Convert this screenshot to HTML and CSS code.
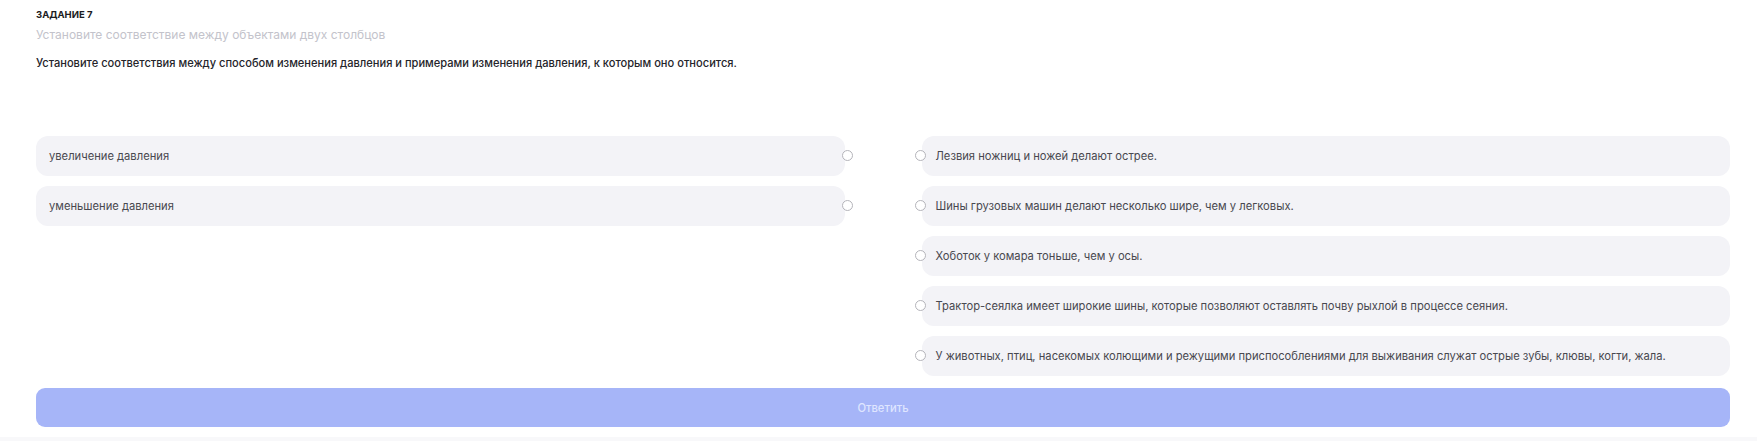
FILE: index.html
```html
<!DOCTYPE html>
<html lang="ru">
<head>
    <meta charset="UTF-8">
    <meta name="viewport" content="width=device-width, initial-scale=1.0">
    <title>Задание 7</title>
    <link rel="stylesheet" href="styles.css">
</head>
<body>

<div class="task">
    <h3 class="task-label">Задание 7</h3>
    <p class="task-hint">Установите соответствие между объектами двух столбцов</p>
    <p class="task-question">Установите соответствия между способом изменения давления и примерами изменения давления, к которым оно относится.</p>

    <div class="match">
        <div class="match-column">
            <div class="match-item left">
                <span>увеличение давления</span>
                <span class="radio"></span>
            </div>
            <div class="match-item left">
                <span>уменьшение давления</span>
                <span class="radio"></span>
            </div>
        </div>
        <div class="match-column">
            <div class="match-item right">
                <span class="radio"></span>
                <span>Лезвия ножниц и ножей делают острее.</span>
            </div>
            <div class="match-item right">
                <span class="radio"></span>
                <span>Шины грузовых машин делают несколько шире, чем у легковых.</span>
            </div>
            <div class="match-item right">
                <span class="radio"></span>
                <span>Хоботок у комара тоньше, чем у осы.</span>
            </div>
            <div class="match-item right">
                <span class="radio"></span>
                <span>Трактор-сеялка имеет широкие шины, которые позволяют оставлять почву рыхлой в процессе сеяния.</span>
            </div>
            <div class="match-item right">
                <span class="radio"></span>
                <span>У животных, птиц, насекомых колющими и режущими приспособлениями для выживания служат острые зубы, клювы, когти, жала.</span>
            </div>
        </div>
    </div>

    <button class="answer-button" disabled>Ответить</button>
</div>

</body>
</html>
```

FILE: styles.css
```css
body {
    font-family: Inter, "Noto Sans", sans-serif;
    margin: 0;
    padding: 0;
    background-color: #f8f8fa;
}
.task {
    background-color: #fff;
    padding: 9px 27px 10px 36px;
}
.task-label {
    margin: 0;
    font-size: 9.5px;
    line-height: 12px;
    font-weight: 700;
    text-transform: uppercase;
    color: #1c1c22;
}
.task-hint {
    margin: 6px 0 0;
    font-size: 12px;
    line-height: 16px;
    color: #c3c3cb;
}
.task-question {
    margin: 12px 0 0;
    font-size: 11.1px;
    line-height: 16px;
    font-weight: 500;
    color: #24242a;
}
/* matching columns */
.match {
    display: grid;
    grid-template-columns: 1fr 1fr;
    column-gap: 77px;
    margin-top: 65px;
}
.match-column {
    display: flex;
    flex-direction: column;
    gap: 10px;
}
.match-item {
    position: relative;
    display: flex;
    align-items: center;
    height: 40px;
    border-radius: 12px;
    background-color: #f3f3f7;
    font-size: 11.2px;
    color: #48484f;
}
.match-item.left {
    padding-left: 13px;
}
.match-item.right {
    padding-left: 14px;
}
.radio {
    position: absolute;
    top: 50%;
    width: 9px;
    height: 9px;
    margin-top: -6px;
    border: 1.5px solid #b4b4ba;
    border-radius: 50%;
    background-color: #fff;
}
.left .radio {
    right: -8px;
}
.right .radio {
    left: -7px;
}
.answer-button {
    display: block;
    width: 100%;
    height: 39px;
    margin-top: 12px;
    border: none;
    border-radius: 9px;
    background-color: #a6b5f8;
    color: #dfe5ff;
    font-family: inherit;
    font-size: 11.2px;
    font-weight: 500;
}
```
